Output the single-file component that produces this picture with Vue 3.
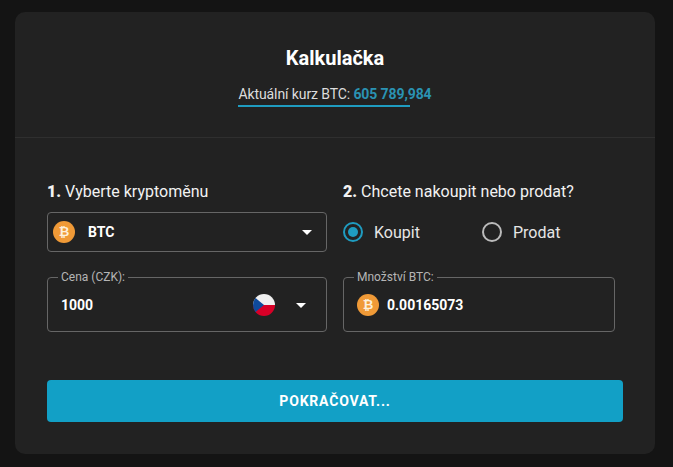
<template>
  <div class="page">
    <div class="card">
      <header class="head">
        <h1>Kalkulačka</h1>
        <div class="rate">
          Aktuální kurz BTC: <b>{{ rate }}</b>
        </div>
      </header>

      <form class="body" @submit.prevent>
        <div class="grid">
          <div class="col-left">
            <h2><b>1.</b> Vyberte kryptoměnu</h2>
            <div class="select">
              <span class="coin">₿</span>
              <span class="select-name">BTC</span>
              <span class="caret"></span>
            </div>
            <fieldset class="field price">
              <legend>Cena (CZK):</legend>
              <div class="field-row">
                <span class="value">{{ price }}</span>
                <svg class="flag" viewBox="0 0 22 22" width="22" height="22">
                  <defs>
                    <clipPath id="round"><circle cx="11" cy="11" r="11" /></clipPath>
                  </defs>
                  <g clip-path="url(#round)">
                    <rect width="22" height="11" fill="#f0f0f0" />
                    <rect y="11" width="22" height="11" fill="#d80027" />
                    <path d="M0 2 L11 11 L0 20 Z" fill="#0f4a9c" />
                  </g>
                </svg>
                <span class="caret"></span>
              </div>
            </fieldset>
          </div>

          <div class="col-right">
            <h2><b>2.</b> Chcete nakoupit nebo prodat?</h2>
            <div class="radios">
              <label v-for="o in options" :key="o" class="radio" @click="side = o">
                <span class="dot" :class="{ on: side == o }"></span>
                {{ o }}
              </label>
            </div>
            <fieldset class="field">
              <legend>Množství BTC:</legend>
              <div class="field-row">
                <span class="coin">₿</span>
                <span class="value amount">{{ amount }}</span>
              </div>
            </fieldset>
          </div>
        </div>

        <button class="go">POKRAČOVAT...</button>
      </form>
    </div>
  </div>
</template>

<script setup>
import { ref } from 'vue'

const rate = '605 789,984'
const price = ref('1000')
const amount = ref('0.00165073')
const options = ['Koupit', 'Prodat']
const side = ref('Koupit')
</script>

<style>
body {
  background: #141414;
}
</style>

<style scoped>
.page {
  width: 673px;
  height: 467px;
  padding: 12px 18px 13px 15px;
  box-sizing: border-box;
  background: #141414;
  font-family: Roboto, "Liberation Sans", sans-serif;
  color: #eee;
}

.card {
  height: 442px;
  background: #222222;
  border-radius: 10px;
}

.head {
  height: 126px;
  box-sizing: border-box;
  padding-top: 34px;
  border-bottom: 1px solid #2f2f2f;
  text-align: center;
}

h1 {
  margin: 0;
  font-size: 20px;
  line-height: 24px;
  font-weight: 700;
  color: #fff;
}

.rate {
  position: relative;
  display: inline-block;
  margin-top: 14px;
  font-size: 14px;
  line-height: 20px;
  letter-spacing: -0.1px;
  color: #ddd;
}

/* the underline stops short of the number, so it is not a text border */
.rate::after {
  content: "";
  position: absolute;
  left: 0;
  bottom: -3px;
  width: 172px;
  height: 2px;
  background: #1f9cc0;
}

.rate b {
  font-weight: 700;
  color: #2a93b3;
}

.body {
  padding: 42px 32px 0;
}

.grid {
  display: grid;
  grid-template-columns: 280px 272px;
  column-gap: 16px;
}

h2 {
  margin: 0 0 8px;
  font-size: 16px;
  line-height: 24px;
  font-weight: 400;
  color: #f2f2f2;
}

h2 b {
  font-weight: 900;
}

.select {
  height: 40px;
  box-sizing: border-box;
  display: flex;
  align-items: center;
  padding: 0 14px 0 5px;
  border: 1px solid #666;
  border-radius: 4px;
  margin-bottom: 19px;
}

.select-name {
  flex: 1;
  margin-left: 13px;
  font-size: 14px;
  font-weight: 700;
  color: #fff;
}

.coin {
  flex: none;
  width: 22px;
  height: 22px;
  border-radius: 50%;
  background: #f09a37;
  color: #fdf0dc;
  font-family: "DejaVu Sans", sans-serif;
  font-size: 13px;
  font-weight: 700;
  line-height: 22px;
  text-align: center;
}

.caret {
  flex: none;
  width: 0;
  height: 0;
  border-left: 5px solid transparent;
  border-right: 5px solid transparent;
  border-top: 5px solid #fff;
}

.radios {
  display: flex;
  height: 40px;
  align-items: center;
  margin-bottom: 19px;
}

.radio {
  flex: none;
  width: 130px;
  display: flex;
  align-items: center;
  gap: 11px;
  font-size: 16px;
  color: #e6e6e6;
}

.radio:first-child {
  width: 139px;
}

.dot {
  width: 20px;
  height: 20px;
  box-sizing: border-box;
  border: 2px solid #bbb;
  border-radius: 50%;
  display: flex;
  align-items: center;
  justify-content: center;
}

.dot.on {
  border-color: #1f9cc0;
}

.dot.on::after {
  content: "";
  width: 10px;
  height: 10px;
  border-radius: 50%;
  background: #1f9cc0;
}

.field {
  height: 61px;
  box-sizing: border-box;
  margin: 0;
  padding: 0 14px 0 13px;
  border: 1px solid #666;
  border-radius: 4px;
  min-width: 0;
}

.price {
  padding-right: 20px;
}

legend {
  margin-left: -3px;
  padding: 0 3px;
  font-size: 12px;
  line-height: 12px;
  color: #b5b5b5;
}

.field-row {
  display: flex;
  align-items: center;
  height: 42px;
  margin-top: 1px;
}

.value {
  flex: 1;
  font-size: 14px;
  font-weight: 700;
  color: #fff;
}

.amount {
  margin-left: 8px;
}

.flag {
  flex: none;
  margin-right: 21px;
}

.go {
  display: block;
  width: 576px;
  height: 42px;
  margin-top: 48px;
  border: 0;
  border-radius: 4px;
  background: #12a0c6;
  color: #fff;
  font-family: inherit;
  font-size: 14px;
  font-weight: 700;
  letter-spacing: 0.8px;
}
</style>
